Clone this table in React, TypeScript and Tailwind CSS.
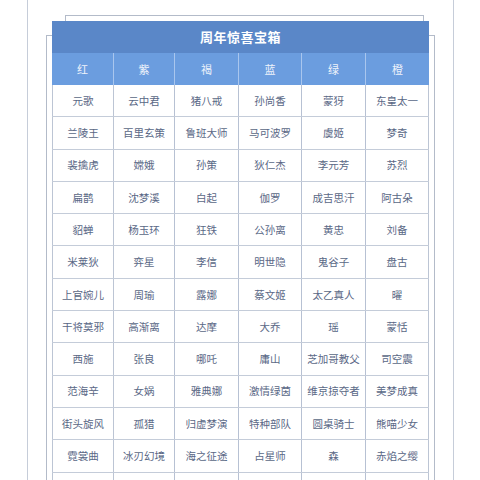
import React from "react";

const cols = ["红", "紫", "褐", "蓝", "绿", "橙"];
const rows: string[][] = [
  ["元歌", "云中君", "猪八戒", "孙尚香", "蒙犽", "东皇太一"],
  ["兰陵王", "百里玄策", "鲁班大师", "马可波罗", "虞姬", "梦奇"],
  ["裴擒虎", "嫦娥", "孙策", "狄仁杰", "李元芳", "苏烈"],
  ["扁鹊", "沈梦溪", "白起", "伽罗", "成吉思汗", "阿古朵"],
  ["貂蝉", "杨玉环", "狂铁", "公孙离", "黄忠", "刘备"],
  ["米莱狄", "弈星", "李信", "明世隐", "鬼谷子", "盘古"],
  ["上官婉儿", "周瑜", "露娜", "蔡文姬", "太乙真人", "曜"],
  ["干将莫邪", "高渐离", "达摩", "大乔", "瑶", "蒙恬"],
  ["西施", "张良", "哪吒", "庸山", "芝加哥教父", "司空震"],
  ["范海辛", "女娲", "雅典娜", "激情绿茵", "维京掠夺者", "美梦成真"],
  ["街头旋风", "孤猎", "归虚梦演", "特种部队", "圆桌骑士", "熊喵少女"],
  ["霓裳曲", "冰刃幻境", "海之征途", "占星师", "森", "赤焰之缨"],
  ["", "", "", "", "", ""],
];

const grid = "grid grid-cols-[62px_61px_64px_63px_64px_63px]";

export default function App() {
  return (
    <div
      className="w-[480px] h-[480px] overflow-hidden bg-white"
      style={{ fontFamily: '"Noto Sans CJK SC", "Noto Sans", sans-serif' }}
    >
      {/* outer card frame */}
      <div className="relative ml-[27px] w-[427px] h-[480px] border-x border-[#c6cdd9]">
        {/* stacked back sheets behind the table */}
        <div className="absolute left-[37px] top-[15px] w-[359px] h-[60px] border border-[#b3bbc9] bg-white" />
        <div className="absolute left-[18px] top-[35px] w-[389px] h-[460px] border border-[#b3bbc9] bg-white" />

        <div className="relative ml-[24px] pt-[21px] w-[377px] flex flex-col">
          <div className="h-[32px] bg-[#5a87c8] flex items-center justify-center text-white font-bold text-[13px] tracking-[0.5px]">
            周年惊喜宝箱
          </div>
          <div className={`${grid} h-[32px] bg-[#6b9ddf]`}>
            {cols.map((c, i) => (
              <div
                key={c}
                className={`flex items-center justify-center text-[11px] text-[#eef3fb] ${
                  i < 5 ? "border-r border-[#a9c6ee]" : ""
                }`}
              >
                {c}
              </div>
            ))}
          </div>
          <div className="flex flex-col bg-white border-x border-[#bcc5d4]">
            {rows.map((r, ri) => (
              <div key={ri} className={`${grid} h-[32.3px] border-b border-[#c4ccd9] -mx-px`}>
                {r.map((n, ci) => (
                  <div
                    key={ci}
                    className={`flex items-center justify-center text-[10.5px] text-[#5a6886] whitespace-nowrap ${
                      ci < 5 ? "border-r border-[#b7c1d3]" : "border-r border-[#bcc5d4]"
                    } ${ci === 0 ? "border-l border-[#bcc5d4]" : ""}`}
                  >
                    {n}
                  </div>
                ))}
              </div>
            ))}
          </div>
        </div>
      </div>
    </div>
  );
}
